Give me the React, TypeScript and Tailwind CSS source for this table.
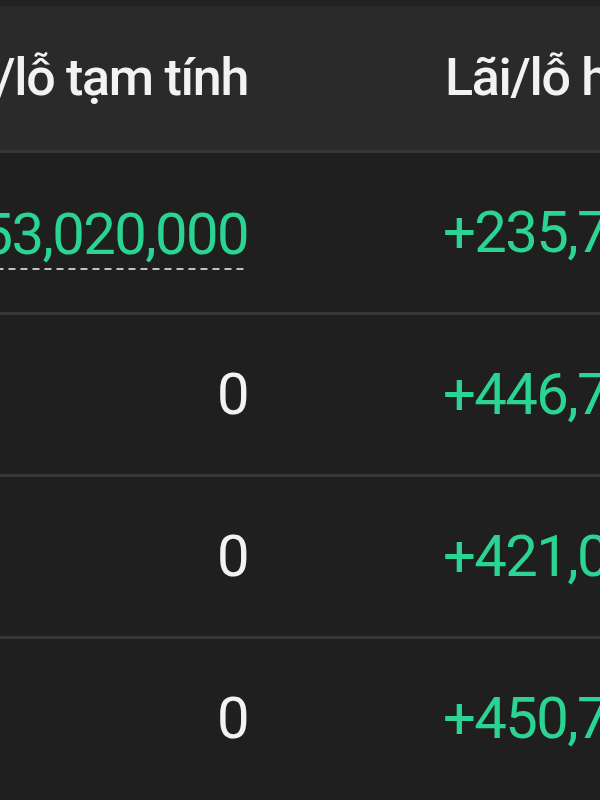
export default function App() {
  const rows = [
    { est: "+53,020,000", estGreen: true, today: "+235,700,000" },
    { est: "0", estGreen: false, today: "+446,700,000" },
    { est: "0", estGreen: false, today: "+421,000,000" },
    { est: "0", estGreen: false, today: "+450,700,000" },
  ]

  return (
    <div
      className="w-[600px] h-[800px] overflow-hidden bg-[#1f1f1f] text-[#f2f2f2]"
      style={{ fontFamily: "Roboto, 'Noto Sans', sans-serif" }}
    >
      {/* header */}
      <div className="flex items-center h-[150px] bg-[#2a2a2a] border-t-[6px] border-[#222222] text-[52px] font-medium tracking-[-1.3px] whitespace-nowrap">
        <div className="w-[248px] shrink-0 flex justify-end">
          <span className="shrink-0">Lãi/lỗ tạm tính</span>
        </div>
        <div className="pl-[197px] shrink-0">Lãi/lỗ hôm nay</div>
      </div>

      {rows.map((r, i) => (
        <div
          key={i}
          className="flex items-center h-[162px] border-t-[3px] border-[#363636] first:border-t-0 text-[58px] tracking-[-1.6px] whitespace-nowrap"
        >
          <div className="w-[248px] shrink-0 flex justify-end">
            {r.estGreen ? (
              <span className="shrink-0 text-[#2bd492] leading-[1.1] pb-[3px] mt-[8px] bg-[linear-gradient(to_right,#c0c0c0_62%,transparent_0)] bg-[length:12px_2px] bg-bottom bg-repeat-x">
                {r.est}
              </span>
            ) : (
              <span className="shrink-0">{r.est}</span>
            )}
          </div>
          <div className="pl-[195px] shrink-0 text-[#2bd492]">{r.today}</div>
        </div>
      ))}
    </div>
  )
}
